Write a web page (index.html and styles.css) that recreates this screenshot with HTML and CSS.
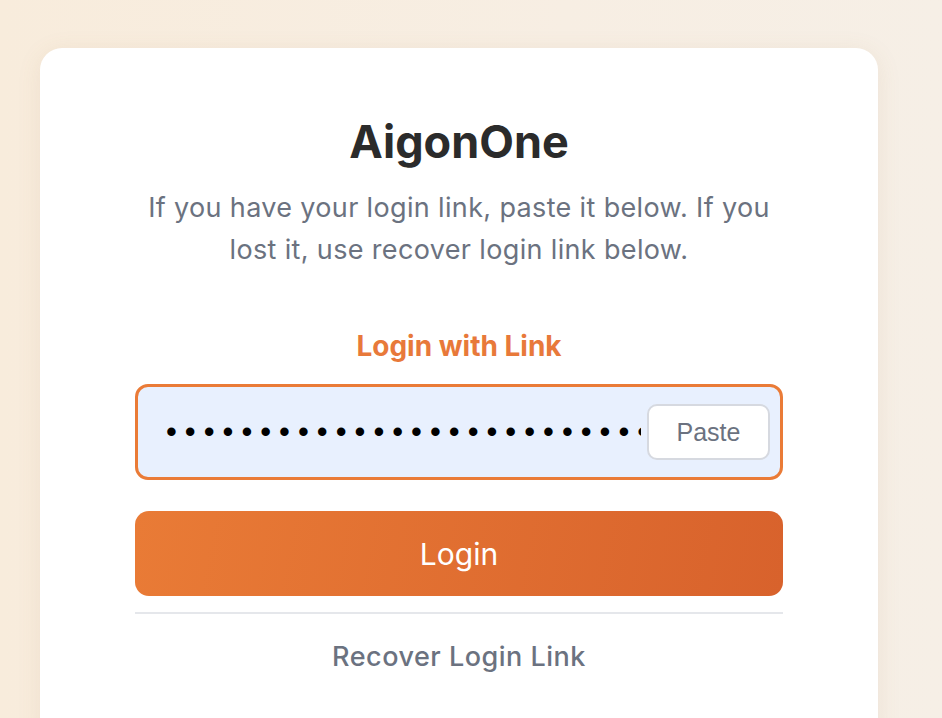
FILE: index.html
```html
<!DOCTYPE html>
<html lang="en">
<head>
<meta charset="utf-8">
<title>AigonOne Login</title>
<link rel="stylesheet" href="styles.css">
</head>
<body>
<main class="card">
  <h1 class="title">AigonOne</h1>
  <p class="intro">If you have your login link, paste it below. If you lost it, use recover login link below.</p>
  <h2 class="section-label">Login with Link</h2>
  <div class="link-field">
    <input class="link-input" type="password" value="https://aigonone.example.com/login/abcdef123456" aria-label="Login link">
    <button class="paste-btn" type="button">Paste</button>
  </div>
  <button class="login-btn" type="button">Login</button>
  <hr class="divider">
  <a class="recover" href="#">Recover Login Link</a>
</main>
</body>
</html>
```
FILE: styles.css
```css
html, body {
  margin: 0;
  height: 100%;
}
body {
  background: linear-gradient(90deg, #f8ecdc 0%, #f7eee3 60%, #f6efe6 100%);
  font-family: Inter, "Noto Sans", sans-serif;
  overflow: hidden;
}
.card {
  box-sizing: border-box;
  width: 838px;
  margin: 48px 0 0 40px;
  padding: 66px 95px 40px;
  background: #ffffff;
  border-radius: 22px;
  box-shadow: 0 4px 24px rgba(160, 120, 70, 0.10);
  display: flex;
  flex-direction: column;
  align-items: stretch;
  text-align: center;
  min-height: 700px;
}
.title {
  margin: 0;
  font-size: 45px;
  font-weight: 700;
  line-height: 56px;
  color: #2b2b2b;
}
.intro {
  margin: 17px 0 0;
  font-size: 27px;
  line-height: 42px;
  letter-spacing: 0.35px;
  color: #6b7280;
}
.section-label {
  margin: 57px 0 0;
  font-size: 28px;
  font-weight: 700;
  line-height: 36px;
  color: #e8793a;
}
.link-field {
  margin-top: 20px;
  display: flex;
  align-items: center;
  height: 90px;
  border: 3px solid #ea7b37;
  border-radius: 13px;
  background: #e8f0fe;
  padding-right: 10px;
}
.link-input {
  flex: 1;
  min-width: 0;
  height: 100%;
  box-sizing: border-box;
  border: none;
  outline: none;
  background: transparent;
  padding: 0 6px 0 28px;
  font-family: "Liberation Sans", sans-serif;
  font-size: 31px;
  letter-spacing: 8px;
  color: #000;
}
.paste-btn {
  width: 123px;
  height: 56px;
  box-sizing: border-box;
  background: #fff;
  border: 2px solid #d6d9e0;
  border-radius: 10px;
  font-family: "Liberation Sans", Arial, sans-serif;
  font-size: 25px;
  color: #6b7280;
  padding: 0;
}
.login-btn {
  margin-top: 31px;
  height: 85px;
  border: none;
  border-radius: 14px;
  background: linear-gradient(100deg, #e97b36 0%, #d8622c 100%);
  color: #fff;
  font-family: Inter, "Noto Sans", sans-serif;
  font-size: 30px;
  font-weight: 400;
}
.divider {
  margin: 16px 0 0;
  border: none;
  height: 2px;
  background: #e5e7eb;
}
.recover {
  margin-top: 25px;
  font-size: 27px;
  font-weight: 500;
  line-height: 36px;
  letter-spacing: 0.5px;
  color: #6b7280;
  text-decoration: none;
}
```
